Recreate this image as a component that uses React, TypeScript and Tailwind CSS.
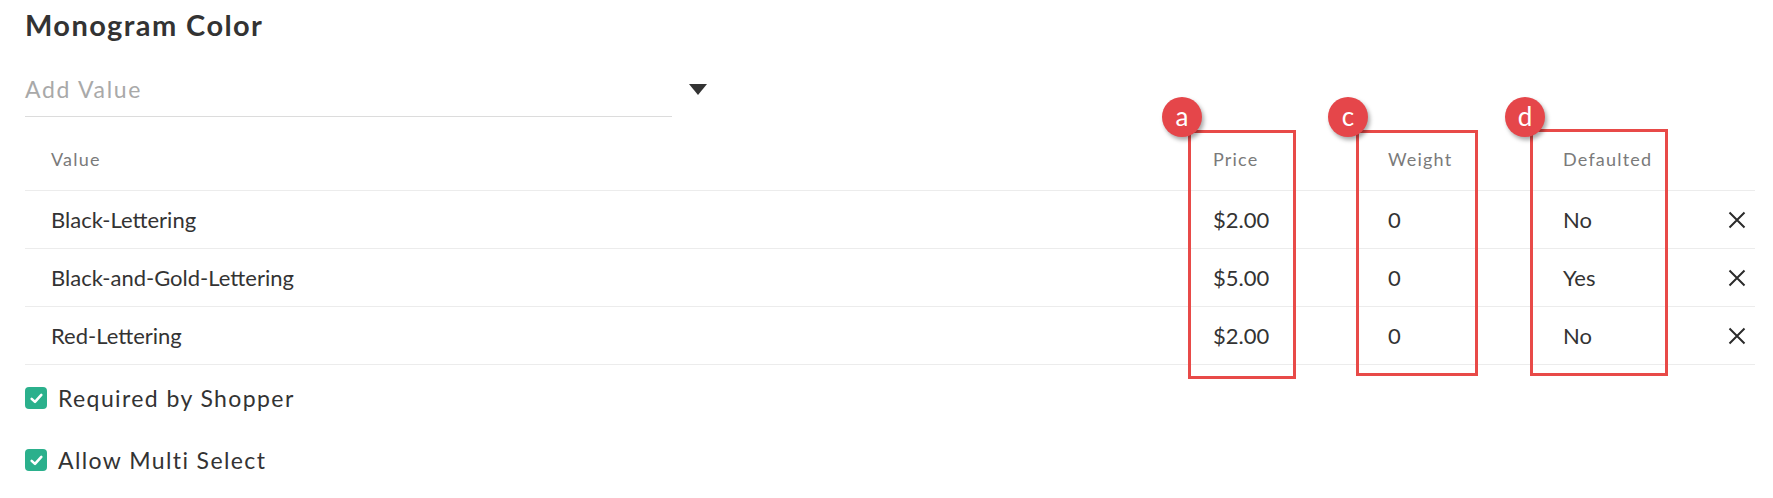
import React from 'react';

const ROWS = [
  { value: 'Black-Lettering', price: '$2.00', weight: '0', defaulted: 'No' },
  { value: 'Black-and-Gold-Lettering', price: '$5.00', weight: '0', defaulted: 'Yes' },
  { value: 'Red-Lettering', price: '$2.00', weight: '0', defaulted: 'No' },
];

const MARKS = [
  { letter: 'a', box: 'left-[1188px] top-[130px] w-[108px] h-[249px]', dot: 'left-[1162px] top-[97px]' },
  { letter: 'c', box: 'left-[1356px] top-[130px] w-[122px] h-[246px]', dot: 'left-[1328px] top-[97px]' },
  { letter: 'd', box: 'left-[1530px] top-[129px] w-[138px] h-[247px]', dot: 'left-[1505px] top-[97px]' },
];

function Check() {
  return (
    <span className="flex h-[22px] w-[22px] items-center justify-center rounded-[4px] bg-[#2bb08c]">
      <svg width="15" height="15" viewBox="0 0 14 14" fill="none">
        <path d="M2.5 7.3 L5.6 10.2 L11.5 3.6" stroke="white" strokeWidth="2.4" strokeLinecap="round" strokeLinejoin="round" />
      </svg>
    </span>
  );
}

function Cross() {
  return (
    <svg width="18" height="18" viewBox="0 0 18 18">
      <path d="M1.5 1.5 L16.5 16.5 M16.5 1.5 L1.5 16.5" stroke="#2b2b2b" strokeWidth="2" />
    </svg>
  );
}

export default function App() {
  return (
    <div className="relative h-[498px] w-[1773px] overflow-hidden bg-white pl-[25px] pr-[18px] font-['Lato',sans-serif] text-[#333]">
      <h2 className="pt-[7px] text-[29px] font-bold leading-[36px] tracking-[1.4px] text-[#333]">Monogram Color</h2>

      {/* Add value select */}
      <div className="mt-[28px] flex items-start">
        <div className="w-[647px] border-b border-[#dcdcdc] pb-[9px] text-[23px] leading-[36px] tracking-[1.7px] text-[#a9a9a9]">
          Add Value
        </div>
        <svg className="ml-[17px] mt-[13px]" width="18" height="11" viewBox="0 0 18 11">
          <path d="M0 0 H18 L9 11 Z" fill="#333" />
        </svg>
      </div>

      {/* Values table */}
      <div>
        <div className="grid grid-cols-[1162px_175px_175px_1fr_18px] border-b border-[#ececec] pl-[26px] pr-[9px] pt-[30px] pb-[19px] text-[18px] leading-[24px] tracking-[1.2px] text-[#7a7a7a]">
          <span>Value</span>
          <span>Price</span>
          <span>Weight</span>
          <span>Defaulted</span>
          <span />
        </div>
        {ROWS.map((row) => (
          <div
            key={row.value}
            className="grid h-[58px] grid-cols-[1162px_175px_175px_1fr_18px] items-center border-b border-[#ececec] pl-[26px] pr-[9px] text-[22px] text-[#333]"
          >
            <span>{row.value}</span>
            <span>{row.price}</span>
            <span>{row.weight}</span>
            <span>{row.defaulted}</span>
            <Cross />
          </div>
        ))}
      </div>

      {/* Options */}
      <div className="mt-[2px]">
        <label className="flex h-[62px] items-center gap-[11px] text-[23px] tracking-[1.4px]">
          <Check />
          Required by Shopper
        </label>
        <label className="flex h-[62px] items-center gap-[11px] text-[23px] tracking-[1.4px]">
          <Check />
          Allow Multi Select
        </label>
      </div>

      {/* Annotation marks */}
      {MARKS.map((m) => (
        <React.Fragment key={m.letter}>
          <div className={`absolute border-[3px] border-[#e84a48] ${m.box}`} />
          <div
            className={`absolute flex h-[40px] w-[40px] items-center justify-center rounded-full bg-[#e5464a] pb-[3px] text-[26px] leading-none text-white shadow-[2px_3px_4px_rgba(0,0,0,0.35)] ${m.dot}`}
          >
            {m.letter}
          </div>
        </React.Fragment>
      ))}
    </div>
  );
}
